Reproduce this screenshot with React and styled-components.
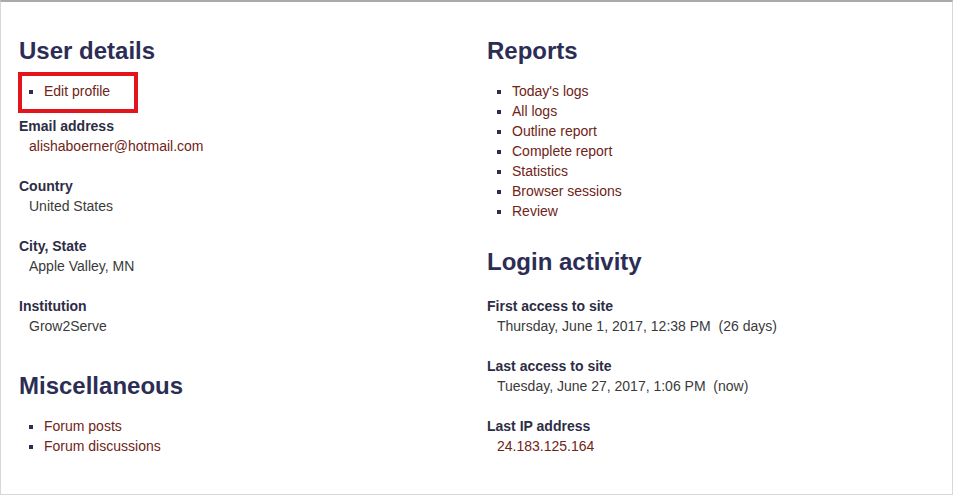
import React from 'react';
import styled, { createGlobalStyle } from 'styled-components';

const GlobalStyle = createGlobalStyle`
  html, body {
    margin: 0;
    padding: 0;
    background: #fff;
  }
  body {
    font-family: "Liberation Sans", Arial, sans-serif;
    font-size: 14px;
    color: #333;
  }
`;

const Card = styled.div`
  box-sizing: border-box;
  width: 953px;
  height: 495px;
  border: 1px solid #d8d8d8;
  border-top: 2px solid #a9a9a9;
  background: #fff;
  padding: 35px 18px 0;
  display: grid;
  grid-template-columns: 1fr 1fr;
  column-gap: 21px;
  align-items: start;
`;

const Column = styled.div`
  display: flex;
  flex-direction: column;
`;

const Section = styled.section`
  & + & {
    margin-top: 16px;
  }
`;

const Heading = styled.h3`
  margin: 0;
  font-size: 24px;
  line-height: 28px;
  font-weight: bold;
  color: #2c2d55;
`;

const LinkList = styled.ul`
  list-style: square;
  color: #2c2d55;
  line-height: 20px;
  width: fit-content;
  ${({ $highlighted }) =>
    $highlighted
      ? `
    margin: 7px 0 3px -1px;
    padding: 5px 24px 8px 22px;
    border: 4px solid #e3151c;
  `
      : `
    margin: 16px 0 11px 0;
    padding: 0 0 0 25px;
  `}
`;

const Link = styled.a`
  color: #6f2417;
  text-decoration: none;
`;

const Details = styled.dl`
  margin: ${({ $spaced }) => ($spaced ? '20px 0 0' : '0')};
  line-height: 20px;
`;

const Field = styled.div`
  margin-bottom: 20px;
`;

const Label = styled.dt`
  font-weight: bold;
  color: #2c2d45;
`;

const Value = styled.dd`
  margin: 0 0 0 10px;
  color: ${({ $link }) => ($link ? '#6f2417' : '#3a3a3a')};
  white-space: pre;
`;

const userFields = [
  { label: 'Email address', value: 'alishaboerner@hotmail.com', link: true },
  { label: 'Country', value: 'United States' },
  { label: 'City, State', value: 'Apple Valley, MN' },
  { label: 'Institution', value: 'Grow2Serve' },
];

const loginFields = [
  { label: 'First access to site', value: 'Thursday, June 1, 2017, 12:38 PM  (26 days)' },
  { label: 'Last access to site', value: 'Tuesday, June 27, 2017, 1:06 PM  (now)' },
  { label: 'Last IP address', value: '24.183.125.164', link: true },
];

const reports = [
  "Today's logs",
  'All logs',
  'Outline report',
  'Complete report',
  'Statistics',
  'Browser sessions',
  'Review',
];

const FieldList = ({ fields, spaced }) => (
  <Details $spaced={spaced}>
    {fields.map((f) => (
      <Field key={f.label}>
        <Label>{f.label}</Label>
        <Value $link={f.link}>{f.value}</Value>
      </Field>
    ))}
  </Details>
);

const Links = ({ items, highlighted }) => (
  <LinkList $highlighted={highlighted}>
    {items.map((t) => (
      <li key={t}>
        <Link href="#">{t}</Link>
      </li>
    ))}
  </LinkList>
);

export default function App() {
  return (
    <>
      <GlobalStyle />
      <Card>
        <Column>
          <Section>
            <Heading>User details</Heading>
            <Links items={['Edit profile']} highlighted />
            <FieldList fields={userFields} />
          </Section>
          <Section>
            <Heading>Miscellaneous</Heading>
            <Links items={['Forum posts', 'Forum discussions']} />
          </Section>
        </Column>
        <Column>
          <Section>
            <Heading>Reports</Heading>
            <Links items={reports} />
          </Section>
          <Section>
            <Heading>Login activity</Heading>
            <FieldList fields={loginFields} spaced />
          </Section>
        </Column>
      </Card>
    </>
  );
}
